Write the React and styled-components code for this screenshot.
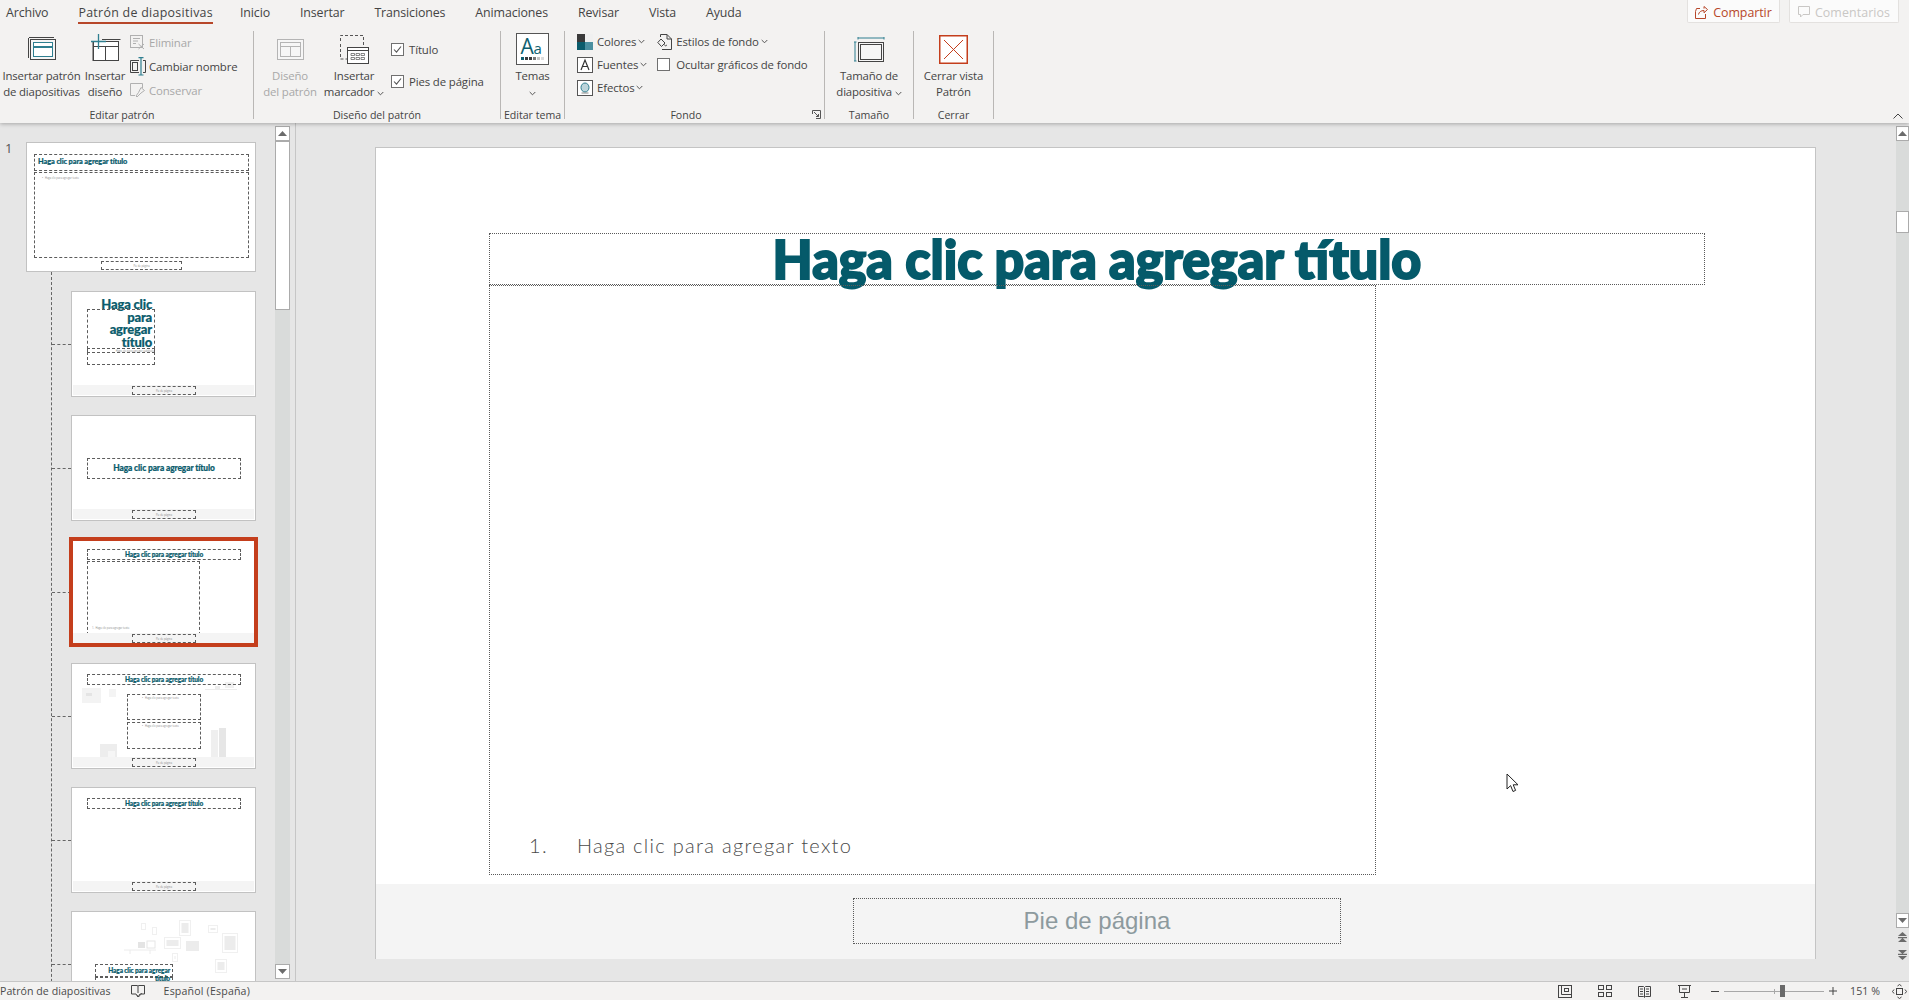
import React from "react";
import styled, { createGlobalStyle, css } from "styled-components";

const Global = createGlobalStyle`
  html, body { margin: 0; padding: 0; height: 100%; overflow: hidden; background: #e6e6e6; }
  * { box-sizing: border-box; }
  #root { height: 1000px; }
`;

const uiFont = `"Open Sans", "Noto Sans", sans-serif`;
const teal = "#2f7f90";
const red = "#c43e1c";
const ink = "#444444";
const mute = "#a8a8a8";

const Root = styled.div`
  width: 1909px; height: 1000px; display: flex; flex-direction: column; overflow: hidden;
  font-family: ${uiFont}; font-size: 11.5px; color: ${ink}; background: #e6e6e6; position: relative;
`;
const Ribbon = styled.header`
  height: 123px; flex: none; background: #f3f2f1; position: relative; z-index: 2;
  box-shadow: 0 1px 4px rgba(0,0,0,.28);
`;
const TabRow = styled.nav`
  height: 26px; display: flex; align-items: flex-start; padding-right: 10px;
`;
const Tab = styled.div`
  height: 24px; line-height: 25px; padding: 0 15px; font-size: 12.4px; letter-spacing: ${p => p.$active ? ".3px" : "-.12px"}; white-space: nowrap; position: relative;
  &:first-child { padding-left: 6px; }
  ${p => p.$active && css`
    margin-right: -3px;
    &::after { content: ""; position: absolute; left: 15px; right: 15px; bottom: 0; height: 2px; background: #b7472a; }
  `}
`;
const TabActions = styled.div`
  margin-left: auto; display: flex; gap: 9px;
`;
const HeadButton = styled.div`
  height: 23px; width: ${p => p.$w}px; display: flex; align-items: center; justify-content: center; gap: 5px; padding-top: 2px;
  background: #fbfbfb; border: 1px solid #e3e1df; border-top: 0; border-radius: 0 0 2px 2px;
  font-size: 12.4px; font-weight: ${p => p.$strong ? 500 : 400}; color: ${p => p.$strong ? "#b7472a" : "#c9c7c5"};
  letter-spacing: ${p => p.$strong ? "-.05px" : ".1px"};
`;
const ToolRow = styled.div`
  display: flex; padding-top: 5px;
`;
const Group = styled.section`
  width: ${p => p.$w}px; height: 88px; flex: none; display: flex; flex-direction: column; border-right: 1px solid #b9b7b5; position: relative;
`;
const GroupBody = styled.div`
  flex: 1; display: flex; min-height: 0; padding-left: ${p => p.$pad || 0}px; gap: ${p => p.$gap || 0}px;
`;
const GroupLabel = styled.div`
  height: 14px; margin-bottom: -3px; line-height: 14px; text-align: center; font-size: 10.6px; white-space: nowrap; flex: none;
  padding-right: ${p => p.$shift || 0}px;
`;
const Launcher = styled.span`
  position: absolute; right: 3px; bottom: 0; line-height: 0;
`;
const BigButton = styled.div`
  width: ${p => p.$w}px; flex: none; display: flex; flex-direction: column; align-items: center;
  color: ${p => p.$off ? mute : ink}; margin-left: ${p => p.$ml || 0}px;
`;
const BigIcon = styled.div`
  height: 37px; display: flex; align-items: center; justify-content: center; flex: none;
  padding-bottom: ${p => p.$lift ?? 1}px;
`;
const BigText = styled.div`
  font-size: 11.4px; letter-spacing: -.16px; line-height: 16px; text-align: center; white-space: nowrap;
`;
const Stack = styled.div`
  display: flex; flex-direction: column; margin-top: ${p => p.$top ?? -1}px; margin-left: ${p => p.$ml || 0}px;
`;
const SmallRow = styled.div`
  height: ${p => p.$h}px; display: flex; align-items: center; gap: ${p => p.$gap ?? 3}px; white-space: nowrap;
  font-size: 11.4px; letter-spacing: -.13px; color: ${p => p.$off ? mute : ink};
`;
const Caret = styled.span`
  margin-left: -2px; line-height: 0; display: inline-flex;
`;
const Check = styled.span`
  width: 13px; height: 13px; background: #fff; border: 1px solid #707070; display: inline-flex; align-items: center; justify-content: center; flex: none;
`;
const Collapse = styled.span`
  position: absolute; right: 6px; bottom: 4px; line-height: 0;
`;

const Main = styled.main`
  flex: 1; min-height: 0; display: flex;
`;
const Pane = styled.aside`
  width: 296px; flex: none; display: flex; border-right: 1px solid #c6c6c6; background: #e6e6e6; padding-right: 5px;
`;
const ThumbColumn = styled.div`
  flex: 1; min-width: 0; overflow: hidden; padding-top: 19px;
`;
const MasterRow = styled.div`
  display: flex; align-items: flex-start;
`;
const SlideNumber = styled.div`
  width: 26px; padding-left: 5px; font-size: 13px; line-height: 13px; color: #555; flex: none;
`;
const Tree = styled.div`
  margin-left: 51px; border-left: 1px dashed #666; padding-top: 19px; display: flex; flex-direction: column; gap: 18px;
`;
const TreeRow = styled.div`
  display: flex; align-items: center;
`;
const Branch = styled.div`
  width: 19px; border-top: 1px dashed #666; flex: none;
`;
const Thumb = styled.div`
  width: ${p => p.$w}px; height: ${p => p.$h}px; flex: none; background: #fff; position: relative; overflow: hidden;
  border: 1px solid ${p => p.$sel ? red : "#c2c2c2"};
  ${p => p.$sel && css`box-shadow: inset 0 0 0 1px ${red};`}
`;
const ThumbWrap = styled.div`
  flex: none; ${p => p.$sel && css`box-shadow: 0 0 0 2px ${red};`}
`;
const Band = styled.div`
  position: absolute; left: 1px; right: 1px; top: 93px; height: 10px; background: #f4f4f4;
`;
const Box = styled.div`
  position: absolute; left: ${p => p.$x}px; top: ${p => p.$y}px; width: ${p => p.$w}px; height: ${p => p.$h}px;
  border: 1px dashed #5c5c5c;
`;
const MiniTitle = styled.div`
  position: absolute; left: ${p => p.$x}px; top: ${p => p.$y}px; width: ${p => p.$w}px;
  font-family: "Lato", "Open Sans", sans-serif; font-weight: 900; color: #0b5c6c; font-size: ${p => p.$size}px;
  line-height: ${p => p.$lh || p.$size}px; letter-spacing: ${p => p.$ls ?? -.1}px; -webkit-text-stroke: .2px #0b5c6c;
  text-align: ${p => p.$align || "center"}; white-space: ${p => p.$wrap ? "pre-line" : "nowrap"};
`;
const MiniText = styled.div`
  position: absolute; left: ${p => p.$x}px; top: ${p => p.$y}px; width: ${p => p.$w}px;
  font-size: 2.6px; line-height: 4px; color: #8c8c8c; white-space: nowrap; text-align: ${p => p.$align || "left"};
`;
const Deco = styled.svg`
  position: absolute; left: 0; top: 0; width: 100%; height: 100%;
`;

const ScrollRail = styled.div`
  width: ${p => p.$w}px; flex: none; margin-top: 3px; margin-bottom: 2px; display: flex; flex-direction: column; background: #d9dbda;
`;
const SideRail = styled(ScrollRail)`
  flex: 1 1 0; min-height: 0; margin-bottom: 0;
`;
const ScrollButton = styled.div`
  height: 15px; flex: none; background: #fff; border: 1px solid #ababab; display: flex; align-items: center; justify-content: center;
`;
const ScrollThumb = styled.div`
  height: ${p => p.$h}px; flex: none; background: #fff; border: 1px solid #ababab; margin-top: ${p => p.$top || 0}px;
`;
const ScrollFill = styled.div` flex: 1; `;
const Stage = styled.div`
  flex: 1; min-width: 0; display: flex;
`;
const Viewport = styled.div`
  flex: 1; min-width: 0; overflow: hidden; padding: 24px 0 0 79px; position: relative;
`;
const Slide = styled.div`
  width: 1441px; height: 812px; background: #fff; border: 1px solid #c4c4c4; border-bottom: 0; position: relative;
`;
const SlideBand = styled.div`
  position: absolute; left: 0; right: 0; top: 736px; bottom: 0; background: #f4f4f4;
`;
const Placeholder = styled.div`
  position: absolute; left: ${p => p.$x}px; top: ${p => p.$y}px; width: ${p => p.$w}px; height: ${p => p.$h}px;
  border: 1px dotted #5a5a5a; display: flex;
`;
const SlideTitle = styled.div`
  width: 100%; text-align: center; font-family: "Lato", "Open Sans", sans-serif; font-weight: 900; font-size: 53px; line-height: 49px;
  color: #055a6a; white-space: nowrap; transform: scaleX(.98); -webkit-text-stroke: 2px #055a6a;
`;
const ListLine = styled.div`
  position: absolute; left: 39px; bottom: 17px; display: flex; gap: 29px;
  font-family: "Lato", "Open Sans", sans-serif; font-weight: 300; font-size: 20px; line-height: 24px; letter-spacing: 1.3px; color: #4a4a4a;
`;
const FooterText = styled.div`
  margin: auto; font-family: "Liberation Sans", Arial, sans-serif; font-size: 24px; color: #8d9a9e;
`;
const Pointer = styled.svg`
  position: absolute; left: 1130px; top: 625px;
`;
const PageArrows = styled.div`
  height: 53px; flex: none; background: #e6e6e6; display: flex; flex-direction: column; align-items: center; padding-top: 4px; gap: 8px;
`;
const RightRail = styled.div`
  width: 13px; flex: none; display: flex; flex-direction: column; background: #e6e6e6;
`;

const Status = styled.footer`
  height: 19px; flex: none; background: #f3f2f1; border-top: 1px solid #c6c6c6; display: flex; align-items: center;
  font-size: 10.6px; color: #4a4a4a; position: relative; z-index: 2; white-space: nowrap; letter-spacing: .05px;
`;
const StatusIcon = styled.span`
  margin-left: ${p => p.$ml}px; line-height: 0; display: inline-flex; flex: none;
`;
const StatusText = styled.span`
  margin-left: ${p => p.$ml || 0}px; letter-spacing: ${p => p.$ls ?? .05}px;
`;
const StatusRight = styled.div`
  margin-left: auto; display: flex; align-items: center; padding-right: 2px;
`;
const Slider = styled.div`
  width: 100px; height: 1px; background: #a8a8a8; margin-left: 5px; position: relative;
`;
const SliderKnob = styled.span`
  position: absolute; left: 56px; top: -6px; width: 5px; height: 12px; background: #6a6a6a;
`;
const SliderTick = styled.span`
  position: absolute; left: 50px; top: -2px; width: 1px; height: 5px; background: #a8a8a8;
`;

const Chev = ({ c = "#555" }) => (
  <svg width="7" height="5" viewBox="0 0 7 5" fill="none"><path d="M.7 1 3.5 3.8 6.3 1" stroke={c} strokeWidth="1" /></svg>
);
const Tick = () => (
  <svg width="11" height="11" viewBox="0 0 11 11" fill="none"><path d="M2 5.5 4.5 8.2 9 2.5" stroke="#555" strokeWidth="1.1" /></svg>
);
const Tri = ({ up, c = "#6b6b6b" }) => (
  <svg width="9" height="5" viewBox="0 0 9 5"><path d={up ? "M4.5 0 9 5H0Z" : "M0 0H9L4.5 5Z"} fill={c} /></svg>
);
const DoubleTri = ({ up }) => (
  <svg width="9" height="10" viewBox="0 0 9 10" fill="#6b6b6b">
    {up ? <path d="M4.5 0 9 4H0ZM0 5H9V6.2H0ZM4.5 6 9 10H0Z" /> : <path d="M0 0H9L4.5 4ZM0 3.8H9V5H0ZM0 6H9L4.5 10Z" />}
  </svg>
);

const IcoMaster = () => (
  <svg width="28" height="23" viewBox="0 0 28 23" fill="none">
    <path d="M1 .5H26M.5 1V21" stroke="#444" />
    <rect x="2.5" y="2.5" width="25" height="20" fill="#f6f6f6" stroke="#444" />
    <rect x="5.5" y="5.5" width="19" height="4" fill="#fff" stroke={teal} />
    <rect x="5.5" y="10.5" width="19" height="9" fill="#fff" stroke={teal} />
  </svg>
);
const IcoLayoutAdd = () => (
  <svg width="31" height="28" viewBox="0 0 31 28" fill="none">
    <path d="M12 5.5H30.5M3 8V27" stroke="#444" />
    <rect x="3.5" y="7.5" width="25" height="19" fill="#fff" stroke="#444" />
    <path d="M3.5 12.5H28.5M15.5 12.5V26.5" stroke="#444" />
    <path d="M8.5 0V15M1 7.5H16" stroke={teal} strokeWidth="1.3" />
  </svg>
);
const IcoDelete = () => (
  <svg width="16" height="15" viewBox="0 0 16 15" fill="none" stroke="#b0b0b0">
    <rect x=".5" y=".5" width="12" height="12" /><path d="M3 3.5H10M3 6H8M3 8.5H6" /><path d="M8.5 9 14 14M14 9 8.5 14" />
  </svg>
);
const IcoRename = () => (
  <svg width="16" height="19" viewBox="0 0 16 19" fill="none">
    <path d="M.5 3.5H9M.5 3.5V15.5H9" stroke="#444" /><rect x="2.5" y="5.5" width="5" height="8" stroke="#444" />
    <path d="M11 1V18M8.5 .7H13.5M8.5 18H13.5" stroke={teal} strokeWidth="1.2" />
    <path d="M13 3.5H15.5V15.5H13" stroke="#444" />
  </svg>
);
const IcoKeep = () => (
  <svg width="16" height="15" viewBox="0 0 16 15" fill="none" stroke="#b0b0b0">
    <path d="M12.5 5V.5H.5V12.5H5" /><path d="M6 13 8.5 9.5 11 4.5 14.5 7.5 11 10 7 14Z" />
  </svg>
);
const IcoDesign = () => (
  <svg width="27" height="21" viewBox="0 0 27 21" fill="none" stroke="#b4b4b4">
    <rect x=".5" y=".5" width="26" height="20" fill="#f6f6f6" /><rect x="3.5" y="3.5" width="20" height="14" /><path d="M3.5 7.5H23.5M13.5 7.5V17.5" />
  </svg>
);
const IcoPlaceholder = () => (
  <svg width="29" height="29" viewBox="0 0 29 29" fill="none">
    <path d="M.5 6V.5H23.5V11M.5 9V24H7" stroke="#555" strokeDasharray="3 2" />
    <rect x="7.5" y="12.5" width="21" height="16" fill="#fff" stroke="#444" />
    <path d="M7.5 15.5H28.5" stroke="#444" />
    <path d="M11 18.5H14.5V20.5H11ZM16 18.5H19.5V20.5H16ZM21 18.5H24.5V20.5H21ZM11 22.5H14.5V24.5H11ZM16 22.5H19.5V24.5H16ZM21 22.5H24.5V24.5H21Z" stroke="#555" strokeWidth=".7" />
  </svg>
);
const IcoThemes = () => (
  <svg width="33" height="32" viewBox="0 0 33 32" fill="none">
    <rect x=".5" y=".5" width="32" height="31" fill="#fff" stroke="#555" />
    <text x="4.5" y="21" fontFamily="Open Sans, sans-serif" fontSize="21" fill="#0f5f70">A</text>
    <text x="17.5" y="21" fontFamily="Open Sans, sans-serif" fontSize="15" fill="#0f5f70">a</text>
    {[["#0f5f70", 5], ["#3a3a3a", 9], ["#3a3a3a", 13], ["#777", 17], ["#c4c4c4", 21], ["#dcdcdc", 25]].map(([f, x]) => (
      <rect key={x} x={x} y="24" width="3" height="3" fill={f} />
    ))}
  </svg>
);
const IcoColors = () => (
  <svg width="16" height="16" viewBox="0 0 16 16">
    <rect width="16" height="16" fill="#4a8fa0" /><rect width="8" height="8" fill="#3a3a3a" /><rect x="8" width="8" height="8" fill="#f0f0f0" /><rect y="8" width="8" height="8" fill="#0b5c6c" />
  </svg>
);
const IcoFonts = () => (
  <svg width="16" height="16" viewBox="0 0 16 16" fill="none">
    <rect x=".5" y=".5" width="15" height="15" fill="#fff" stroke="#555" />
    <path d="M4 13 8 3 12 13M5.5 9.5H10.5" stroke="#333" strokeWidth="1.2" />
  </svg>
);
const IcoEffects = () => (
  <svg width="16" height="16" viewBox="0 0 16 16" fill="none">
    <rect x=".5" y=".5" width="15" height="15" fill="#fff" stroke="#555" />
    <ellipse cx="8" cy="7.5" rx="4" ry="4.5" fill="#bcd4da" stroke={teal} /><path d="M4.5 13H11.5" stroke="#888" />
  </svg>
);
const IcoBackground = () => (
  <svg width="15" height="16" viewBox="0 0 15 16" fill="none" stroke="#444">
    <path d="M3.5 3V.5H10L14.5 5V15.5H5" /><path d="M10 .5V5H14.5" /><path d="M.8 8.5 4 5 8 9 4.5 12.5Z" fill="#f3f2f1" /><path d="M7.5 10.5C8 12.5 9.8 12.2 9.5 10.8" />
  </svg>
);
const IcoSize = () => (
  <svg width="31" height="25" viewBox="0 0 31 25" fill="none">
    <path d="M4 1H30M4 0V2.5M30 0V2.5M1 5V24M0 5H2.5M0 24H2.5" stroke={teal} />
    <rect x="4.5" y="5.5" width="25" height="19" fill="#f6f6f6" stroke="#444" />
    <rect x="6.5" y="7.5" width="21" height="15" fill="#f6f6f6" stroke="#444" />
  </svg>
);
const IcoClose = () => (
  <svg width="29" height="29" viewBox="0 0 29 29" fill="none">
    <rect x=".75" y=".75" width="27.5" height="27.5" fill="#fff" stroke={red} strokeWidth="1.5" /><path d="M5 5 24 24M24 5 5 24" stroke={red} />
  </svg>
);
const IcoShare = () => (
  <svg width="13" height="13" viewBox="0 0 13 13" fill="none" stroke="#b7472a">
    <path d="M5 2.5H1.5L.5 5.5V12.5H10.5V8" /><path d="M3.5 8.5C4 6 6 4.5 9 4.5V6.8L12.5 3.5 9 .5V2.6" />
  </svg>
);
const IcoComment = () => (
  <svg width="12" height="12" viewBox="0 0 12 12" fill="none" stroke="#c9c7c5">
    <path d="M.5 .5H11.5V8.5H5L2.5 11V8.5H.5Z" />
  </svg>
);
const IcoNotes = () => (
  <svg width="14" height="14" viewBox="0 0 14 14" fill="none" stroke="#444">
    <path d="M.5 1.5H6.5L7 2.5 7.5 1.5H13.5V10H9L7 13 5 10H.5Z" /><path d="M7 2.5V9" /><path d="M6 11 7.5 13 11 9" strokeWidth=".8" />
  </svg>
);
const IcoNormal = () => (
  <svg width="14" height="13" viewBox="0 0 14 13" fill="none" stroke="#444">
    <rect x=".5" y=".5" width="13" height="12" /><path d="M3.5 .5V9.5H13.5" /><rect x="6.5" y="3.5" width="4" height="3" />
  </svg>
);
const IcoSorter = () => (
  <svg width="14" height="12" viewBox="0 0 14 12" fill="none" stroke="#444">
    <rect x=".5" y=".5" width="5" height="4" /><rect x="8.5" y=".5" width="5" height="4" /><rect x=".5" y="7.5" width="5" height="4" /><rect x="8.5" y="7.5" width="5" height="4" />
  </svg>
);
const IcoReading = () => (
  <svg width="13" height="13" viewBox="0 0 13 13" fill="none" stroke="#444">
    <path d="M.5 1.5H5.5L6.5 2.5 7.5 1.5H12.5V11.5H7.5L6.5 12.5 5.5 11.5H.5ZM6.5 2.5V12M2 4H5M2 6.5H5M2 9H5M8 4H11M8 6.5H11M8 9H11" />
  </svg>
);
const IcoPresent = () => (
  <svg width="13" height="13" viewBox="0 0 13 13" fill="none" stroke="#444">
    <path d="M0 .5H13M1.5 .5V7.5H11.5V.5M6.5 7.5V12.5M3 12.5H10M4 4H9" />
  </svg>
);
const IcoFit = () => (
  <svg width="15" height="15" viewBox="0 0 15 15" fill="none" stroke="#444">
    <rect x="4.5" y="4.5" width="6" height="6" /><path d="M5.5 2 7.5 .5 9.5 2M5.5 13 7.5 14.5 9.5 13M2 5.5 .5 7.5 2 9.5M13 5.5 14.5 7.5 13 9.5" />
  </svg>
);
const Minus = () => <svg width="8" height="1" viewBox="0 0 8 1"><path d="M0 .5H8" stroke="#444" /></svg>;
const Plus = () => <svg width="8" height="8" viewBox="0 0 8 8"><path d="M0 4H8M4 0V8" stroke="#444" /></svg>;

const FooterBox = () => (
  <Box $x={60} $y={94} $w={64} $h={9}>
    <MiniText $x={0} $y={1.5} $w={62} $align="center">Pie de página</MiniText>
  </Box>
);

const T = "Haga clic para agregar título";
const B = "Haga clic para agregar texto";

const roomItems = [
  [10, 24, 19, 15, "#f3f3f3"], [14, 29, 6, 3, "#e4e4e4"], [37, 25, 7, 8, "#f4f4f4"],
  [133, 25, 32, 1, "#ececec"], [143, 22, 5, 4, "#ececec"], [153, 18, 9, 6, "#f0f0f0"],
  [28, 80, 17, 14, "#ededed"], [36, 87, 7, 6, "#f6f6f6"], [139, 66, 7, 28, "#efefef"], [147, 64, 7, 30, "#e6e6e6"],
];
const wallFrames = [
  [107, 8, 12, 16], [136, 13, 10, 8], [150, 21, 16, 20],
  [92, 25, 17, 12], [143, 47, 12, 14], [100, 41, 6, 9], [69, 11, 5, 7], [80, 15, 5, 8],
];
const Rects = ({ items }) => (
  <Deco>
    {items.map(([x, y, w, h, f], i) => <rect key={i} x={x} y={y} width={w} height={h} fill={f} />)}
  </Deco>
);
const Wall = () => (
  <Deco>
    {wallFrames.map(([x, y, w, h], i) => (
      <g key={i}>
        <rect x={x + .5} y={y + .5} width={w - 1} height={h - 1} fill="#fff" stroke="#f0f0f0" />
        <rect x={x + 2.5} y={y + 3} width={w - 5} height={h - 6} fill="#ececec" />
      </g>
    ))}
    <rect x="114" y="29" width="13" height="10" fill="#ececec" />
    <path d="M52 38H84M58 38V42M78 38V42" stroke="#ececec" />
    <rect x="66" y="30" width="7" height="6" fill="#e4e4e4" />
    <rect x="75" y="29" width="8" height="7" fill="#fff" stroke="#e6e6e6" />
  </Deco>
);

const layouts = [
  {
    key: "a",
    body: (
      <>
        <Band />
        <MiniTitle $x={13} $y={6} $w={67} $size={13} $lh={12.6} $align="right" $wrap $ls={-.2}>{"Haga clic\npara\nagregar\ntítulo"}</MiniTitle>
        <Box $x={15} $y={17} $w={68} $h={40} />
        <Box $x={15} $y={56} $w={68} $h={5} />
        <MiniText $x={16} $y={57} $w={66} $align="right">Haga clic para agregar subtítulo</MiniText>
        <Box $x={15} $y={60} $w={68} $h={13} />
        <FooterBox />
      </>
    ),
  },
  {
    key: "b",
    body: (
      <>
        <Band />
        <Box $x={15} $y={42} $w={154} $h={21} />
        <MiniTitle $x={15} $y={48} $w={154} $size={8.4} $lh={9}>{T}</MiniTitle>
        <FooterBox />
      </>
    ),
  },
  {
    key: "c",
    sel: true,
    body: (
      <>
        <Box $x={15} $y={9} $w={154} $h={11} />
        <MiniTitle $x={15} $y={10} $w={154} $size={6.5} $lh={9}>{T}</MiniTitle>
        <Box $x={15} $y={21} $w={113} $h={74} />
        <MiniText $x={20} $y={86} $w={60}>1.&nbsp;&nbsp;Haga clic para agregar texto</MiniText>
        <Band />
        <FooterBox />
      </>
    ),
  },
  {
    key: "d",
    body: (
      <>
        <Rects items={roomItems} />
        <Band />
        <Box $x={15} $y={10} $w={154} $h={11} />
        <MiniTitle $x={15} $y={11} $w={154} $size={6.5} $lh={9}>{T}</MiniTitle>
        <Box $x={55} $y={30} $w={74} $h={26} />
        <MiniText $x={70} $y={32} $w={50}>•&nbsp;&nbsp;&nbsp;Haga clic para agregar texto</MiniText>
        <Box $x={55} $y={58} $w={74} $h={27} />
        <MiniText $x={70} $y={60} $w={50}>•&nbsp;&nbsp;&nbsp;Haga clic para agregar texto</MiniText>
        <FooterBox />
      </>
    ),
  },
  {
    key: "e",
    body: (
      <>
        <Band />
        <Box $x={15} $y={10} $w={154} $h={11} />
        <MiniTitle $x={15} $y={11} $w={154} $size={6.5} $lh={9}>{T}</MiniTitle>
        <FooterBox />
      </>
    ),
  },
  {
    key: "f",
    body: (
      <>
        <Wall />
        <Box $x={23} $y={52} $w={78} $h={13} />
        <Box $x={23} $y={65} $w={78} $h={30} />
        <MiniTitle $x={23} $y={55} $w={75} $size={6.5} $lh={8} $align="right" $wrap>{"Haga clic para agregar\ntítulo"}</MiniTitle>
      </>
    ),
  },
];

export default function App() {
  return (
    <Root>
      <Global />
      <Ribbon>
        <TabRow>
          <Tab>Archivo</Tab>
          <Tab $active>Patrón de diapositivas</Tab>
          <Tab>Inicio</Tab>
          <Tab>Insertar</Tab>
          <Tab>Transiciones</Tab>
          <Tab>Animaciones</Tab>
          <Tab>Revisar</Tab>
          <Tab>Vista</Tab>
          <Tab>Ayuda</Tab>
          <TabActions>
            <HeadButton $w={93} $strong><IcoShare />Compartir</HeadButton>
            <HeadButton $w={110}><IcoComment />Comentarios</HeadButton>
          </TabActions>
        </TabRow>
        <ToolRow>
          <Group $w={254}>
            <GroupBody>
              <BigButton $w={83}>
                <BigIcon $lift={2}><IcoMaster /></BigIcon>
                <BigText>Insertar patrón<br />de diapositivas</BigText>
              </BigButton>
              <BigButton $w={44}>
                <BigIcon $lift={4}><IcoLayoutAdd /></BigIcon>
                <BigText>Insertar<br />diseño</BigText>
              </BigButton>
              <Stack $ml={3}>
                <SmallRow $h={24} $off><IcoDelete />Eliminar</SmallRow>
                <SmallRow $h={24}><IcoRename />Cambiar nombre</SmallRow>
                <SmallRow $h={24} $off><IcoKeep />Conservar</SmallRow>
              </Stack>
            </GroupBody>
            <GroupLabel $shift={9}>Editar patrón</GroupLabel>
          </Group>
          <Group $w={247}>
            <GroupBody>
              <BigButton $w={56} $ml={8} $off>
                <BigIcon><IcoDesign /></BigIcon>
                <BigText>Diseño<br />del patrón</BigText>
              </BigButton>
              <BigButton $w={66} $ml={3}>
                <BigIcon><IcoPlaceholder /></BigIcon>
                <BigText>Insertar<br />marcador <Chev /></BigText>
              </BigButton>
              <Stack $ml={4} $top={2}>
                <SmallRow $h={32} $gap={5}><Check><Tick /></Check>Título</SmallRow>
                <SmallRow $h={32} $gap={5}><Check><Tick /></Check>Pies de página</SmallRow>
              </Stack>
            </GroupBody>
            <GroupLabel>Diseño del patrón</GroupLabel>
          </Group>
          <Group $w={64}>
            <GroupBody>
              <BigButton $w={63}>
                <BigIcon $lift={2}><IcoThemes /></BigIcon>
                <BigText>Temas<br /><Chev /></BigText>
              </BigButton>
            </GroupBody>
            <GroupLabel>Editar tema</GroupLabel>
          </Group>
          <Group $w={260}>
            <GroupBody $pad={12}>
              <Stack>
                <SmallRow $h={23} $gap={4}><IcoColors />Colores <Caret><Chev /></Caret></SmallRow>
                <SmallRow $h={23} $gap={4}><IcoFonts />Fuentes <Caret><Chev /></Caret></SmallRow>
                <SmallRow $h={23} $gap={4}><IcoEffects />Efectos <Caret><Chev /></Caret></SmallRow>
              </Stack>
              <Stack $ml={10}>
                <SmallRow $h={23} $gap={4}><IcoBackground />Estilos de fondo <Caret><Chev /></Caret></SmallRow>
                <SmallRow $h={23} $gap={6}><Check />Ocultar gráficos de fondo</SmallRow>
              </Stack>
            </GroupBody>
            <GroupLabel $shift={17}>Fondo</GroupLabel>
            <Launcher>
              <svg width="9" height="9" viewBox="0 0 9 9" fill="none" stroke="#555"><path d="M.5 4V.5H8.5V8.5H4" /><path d="M2 2 6.5 6.5M4 6.5H6.5V4" /></svg>
            </Launcher>
          </Group>
          <Group $w={89}>
            <GroupBody>
              <BigButton $w={88}>
                <BigIcon><IcoSize /></BigIcon>
                <BigText>Tamaño de<br />diapositiva <Chev /></BigText>
              </BigButton>
            </GroupBody>
            <GroupLabel>Tamaño</GroupLabel>
          </Group>
          <Group $w={80}>
            <GroupBody>
              <BigButton $w={79}>
                <BigIcon><IcoClose /></BigIcon>
                <BigText>Cerrar vista<br />Patrón</BigText>
              </BigButton>
            </GroupBody>
            <GroupLabel>Cerrar</GroupLabel>
          </Group>
        </ToolRow>
        <Collapse>
          <svg width="10" height="6" viewBox="0 0 10 6" fill="none"><path d="M.5 5.5 5 1 9.5 5.5" stroke="#444" /></svg>
        </Collapse>
      </Ribbon>

      <Main>
        <Pane>
          <ThumbColumn>
            <MasterRow>
              <SlideNumber>1</SlideNumber>
              <Thumb $w={230} $h={130}>
                <Box $x={7} $y={11} $w={215} $h={17} />
                <MiniTitle $x={11} $y={14} $w={110} $size={7.4} $lh={9} $align="left">{T}</MiniTitle>
                <Box $x={7} $y={29} $w={215} $h={86} />
                <MiniText $x={15} $y={33} $w={60}>•&nbsp;&nbsp;&nbsp;Haga clic para agregar texto</MiniText>
                <Box $x={74} $y={118} $w={81} $h={9}>
                  <MiniText $x={0} $y={2} $w={79} $align="center">Pie de página</MiniText>
                </Box>
              </Thumb>
            </MasterRow>
            <Tree>
              {layouts.map(l => (
                <TreeRow key={l.key}>
                  <Branch />
                  <ThumbWrap $sel={l.sel}>
                    <Thumb $w={185} $h={106} $sel={l.sel}>{l.body}</Thumb>
                  </ThumbWrap>
                </TreeRow>
              ))}
            </Tree>
          </ThumbColumn>
          <ScrollRail $w={15}>
            <ScrollButton><Tri up /></ScrollButton>
            <ScrollThumb $h={169} />
            <ScrollFill />
            <ScrollButton><Tri /></ScrollButton>
          </ScrollRail>
        </Pane>
        <Stage>
          <Viewport>
            <Slide>
              <SlideBand />
              <Placeholder $x={113} $y={85} $w={1216} $h={52}>
                <SlideTitle>{T}</SlideTitle>
              </Placeholder>
              <Placeholder $x={113} $y={137} $w={887} $h={590}>
                <ListLine><span>1.</span><span>{B}</span></ListLine>
              </Placeholder>
              <Placeholder $x={477} $y={750} $w={488} $h={46}>
                <FooterText>Pie de página</FooterText>
              </Placeholder>
              <Pointer width="13" height="20" viewBox="0 0 13 20">
                <path d="M1 1V16L4.6 12.6 7 18.5 9.6 17.4 7.2 11.8H12Z" fill="#fff" stroke="#222" />
              </Pointer>
            </Slide>
          </Viewport>
          <RightRail>
            <SideRail $w={13}>
              <ScrollButton><Tri up /></ScrollButton>
              <ScrollThumb $h={22} $top={70} />
              <ScrollFill />
              <ScrollButton><Tri /></ScrollButton>
            </SideRail>
            <PageArrows>
              <DoubleTri up />
              <DoubleTri />
            </PageArrows>
          </RightRail>
        </Stage>
      </Main>

      <Status>
        <StatusText>Patrón de diapositivas</StatusText>
        <StatusIcon $ml={20}><IcoNotes /></StatusIcon>
        <StatusText $ml={19} $ls={.18}>Español (España)</StatusText>
        <StatusRight>
          <StatusIcon $ml={0}><IcoNormal /></StatusIcon>
          <StatusIcon $ml={26}><IcoSorter /></StatusIcon>
          <StatusIcon $ml={26}><IcoReading /></StatusIcon>
          <StatusIcon $ml={27}><IcoPresent /></StatusIcon>
          <StatusIcon $ml={20}><Minus /></StatusIcon>
          <Slider><SliderTick /><SliderKnob /></Slider>
          <StatusIcon $ml={5}><Plus /></StatusIcon>
          <StatusText $ml={13}>151 %</StatusText>
          <StatusIcon $ml={12}><IcoFit /></StatusIcon>
        </StatusRight>
      </Status>
    </Root>
  );
}
